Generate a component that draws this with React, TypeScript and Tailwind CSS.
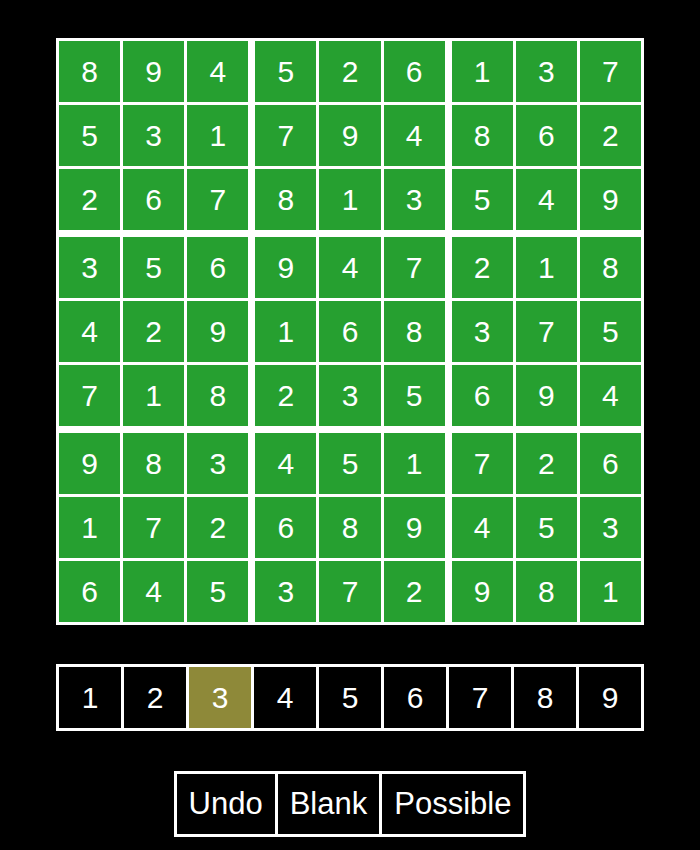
const board = [
  [8, 9, 4, 5, 2, 6, 1, 3, 7],
  [5, 3, 1, 7, 9, 4, 8, 6, 2],
  [2, 6, 7, 8, 1, 3, 5, 4, 9],
  [3, 5, 6, 9, 4, 7, 2, 1, 8],
  [4, 2, 9, 1, 6, 8, 3, 7, 5],
  [7, 1, 8, 2, 3, 5, 6, 9, 4],
  [9, 8, 3, 4, 5, 1, 7, 2, 6],
  [1, 7, 2, 6, 8, 9, 4, 5, 3],
  [6, 4, 5, 3, 7, 2, 9, 8, 1],
]

const selected = 3

function Box({ br, bc }: { br: number; bc: number }) {
  const cells: number[] = []
  for (let r = 0; r < 3; r++) {
    for (let c = 0; c < 3; c++) {
      cells.push(board[br * 3 + r][bc * 3 + c])
    }
  }
  return (
    <div className="grid grid-cols-3 gap-[3px]">
      {cells.map((n, i) => (
        <div key={i} className="flex h-[61px] items-center justify-center bg-[#26a030] text-[30px] text-white">
          {n}
        </div>
      ))}
    </div>
  )
}

export default function App() {
  return (
    <div
      className="flex min-h-[850px] flex-col items-center gap-[40px] bg-black pt-[38px] text-white"
      style={{ fontFamily: '"Liberation Sans", Arial, sans-serif' }}
    >
      <div className="grid w-[588px] grid-cols-3 gap-[7px] bg-white p-[3px]">
        {[0, 1, 2].map((br) => [0, 1, 2].map((bc) => <Box key={`${br}-${bc}`} br={br} bc={bc} />))}
      </div>

      <div className="-mt-px flex gap-[3px] bg-white p-[3px]">
        {[1, 2, 3, 4, 5, 6, 7, 8, 9].map((n) => (
          <div
            key={n}
            className={`flex h-[61px] w-[62px] items-center justify-center text-[30px] ${n === selected ? 'bg-[#8e8939]' : 'bg-black'}`}
          >
            {n}
          </div>
        ))}
      </div>

      <div className="flex gap-[3px] bg-white p-[3px]">
        {['Undo', 'Blank', 'Possible'].map((label) => (
          <div key={label} className="flex h-[60px] items-center bg-black px-[12px] text-[31px]">
            {label}
          </div>
        ))}
      </div>
    </div>
  )
}
